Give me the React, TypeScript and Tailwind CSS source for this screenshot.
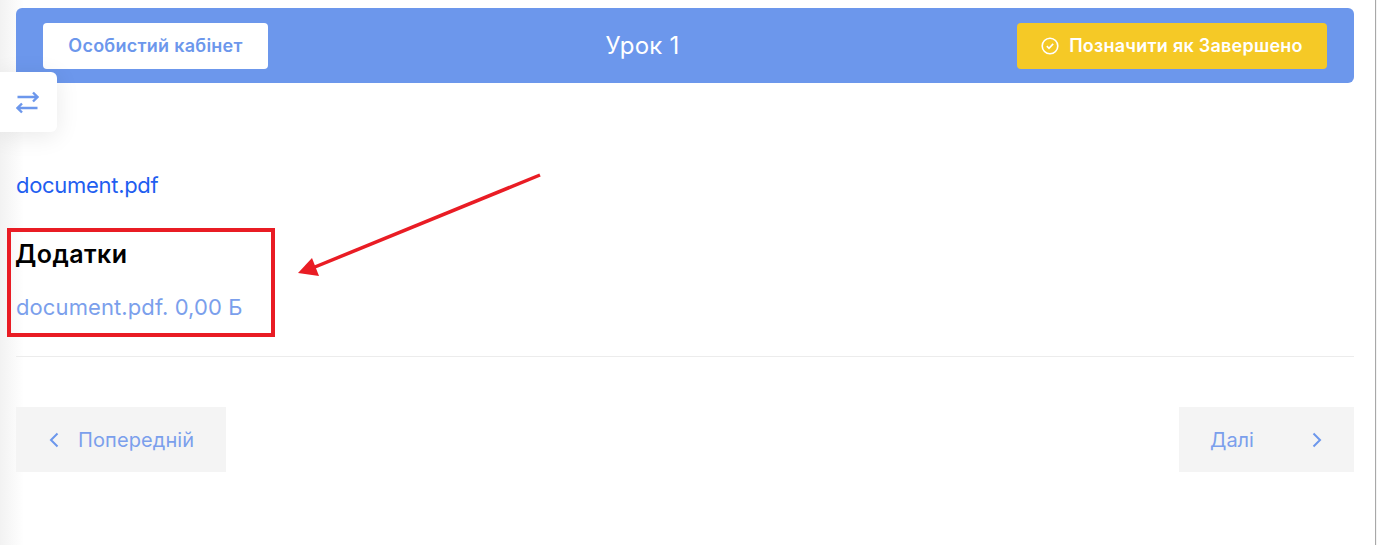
const font = { fontFamily: '"Inter", "Noto Sans", sans-serif' };

export default function App() {
  return (
    <div style={font} className="relative h-[545px] w-[1377px] overflow-hidden bg-white">
      <div className="absolute left-0 top-0 h-full w-6 bg-gradient-to-r from-[#f2f2f2] to-white" />
      <div className="absolute right-0 top-0 h-full w-[2px] border-l border-[#a8a8a8] bg-[#f4f4f4]" />

      <div className="relative ml-4 w-[1338px] pt-2">
        <header className="flex h-[75px] items-center justify-between rounded-[6px] bg-[#6c97ec] pl-[27px] pr-[27px]">
          <button className="flex h-[46px] w-[225px] items-center justify-center rounded-[4px] bg-white text-[18px] font-semibold tracking-[0.25px] text-[#6c97ec]">
            Особистий кабінет
          </button>
          <h1 className="text-[24px] font-normal tracking-[0.2px] text-white">Урок 1</h1>
          <button className="flex h-[46px] w-[310px] items-center justify-center gap-[10px] rounded-[4px] bg-[#f5c926] text-[18px] font-semibold tracking-[0.25px] text-white">
            <svg width="18" height="18" viewBox="0 0 18 18" fill="none" stroke="currentColor" strokeWidth="1.6">
              <circle cx="9" cy="9" r="7.8" />
              <path d="M5.8 9.2 8 11.3l4.2-4.4" />
            </svg>
            Позначити як Завершено
          </button>
        </header>

        <a className="mt-[87px] block text-[22px] leading-[30px] tracking-[-0.3px] text-[#1f5ef0]">document.pdf</a>

        <h2 className="mt-[38px] -ml-px text-[25px] font-semibold leading-[32px] tracking-[0.45px] text-black">Додатки</h2>

        <a className="mt-[22px] block text-[22px] leading-[30px] tracking-[0.1px] text-[#7b9fec]">document.pdf. 0,00 Б</a>

        <hr className="mt-[34px] border-0 border-t border-[#ececec]" />

        <nav className="mt-[50px] flex justify-between">
          <a className="flex h-[65px] w-[210px] items-center bg-[#f4f4f4] pl-[33px] text-[20px] tracking-[0.1px] text-[#7b9fec]">
            <svg width="10" height="16" viewBox="0 0 10 16" fill="none" stroke="#6c97ec" strokeWidth="2">
              <path d="M8.5 1.5 2 8l6.5 6.5" />
            </svg>
            <span className="ml-[19px]">Попередній</span>
          </a>
          <a className="flex h-[65px] w-[175px] items-center justify-between bg-[#f4f4f4] pl-[31px] pr-[32px] text-[20px] text-[#7b9fec]">
            <span>Далі</span>
            <svg width="10" height="16" viewBox="0 0 10 16" fill="none" stroke="#6c97ec" strokeWidth="2">
              <path d="M1.5 1.5 8 8l-6.5 6.5" />
            </svg>
          </a>
        </nav>
      </div>

      <button className="absolute left-0 top-[72px] flex h-[60px] w-[57px] items-center rounded-r-[6px] bg-white pl-[16px] shadow-[0_4px_24px_rgba(0,0,0,0.09)]">
        <svg width="23" height="24" viewBox="0 0 23 24" fill="none" stroke="#6c97ec" strokeWidth="2.4">
          <path d="M1.5 7h20M17 2.5 21.5 7 17 11.5" />
          <path d="M21.5 18h-20M6 13.5 1.5 18 6 22.5" />
        </svg>
      </button>

      {/* annotations */}
      <div className="absolute left-[7px] top-[228px] h-[109px] w-[268px] border-[4px] border-[#e91c24]" />
      <svg className="absolute left-[290px] top-[165px]" width="260" height="120" viewBox="0 0 260 120">
        <path d="M250 10 20 104" stroke="#e91c24" strokeWidth="3.5" />
        <path d="M8 108 22 93l7 18z" fill="#e91c24" />
      </svg>
    </div>
  );
}
